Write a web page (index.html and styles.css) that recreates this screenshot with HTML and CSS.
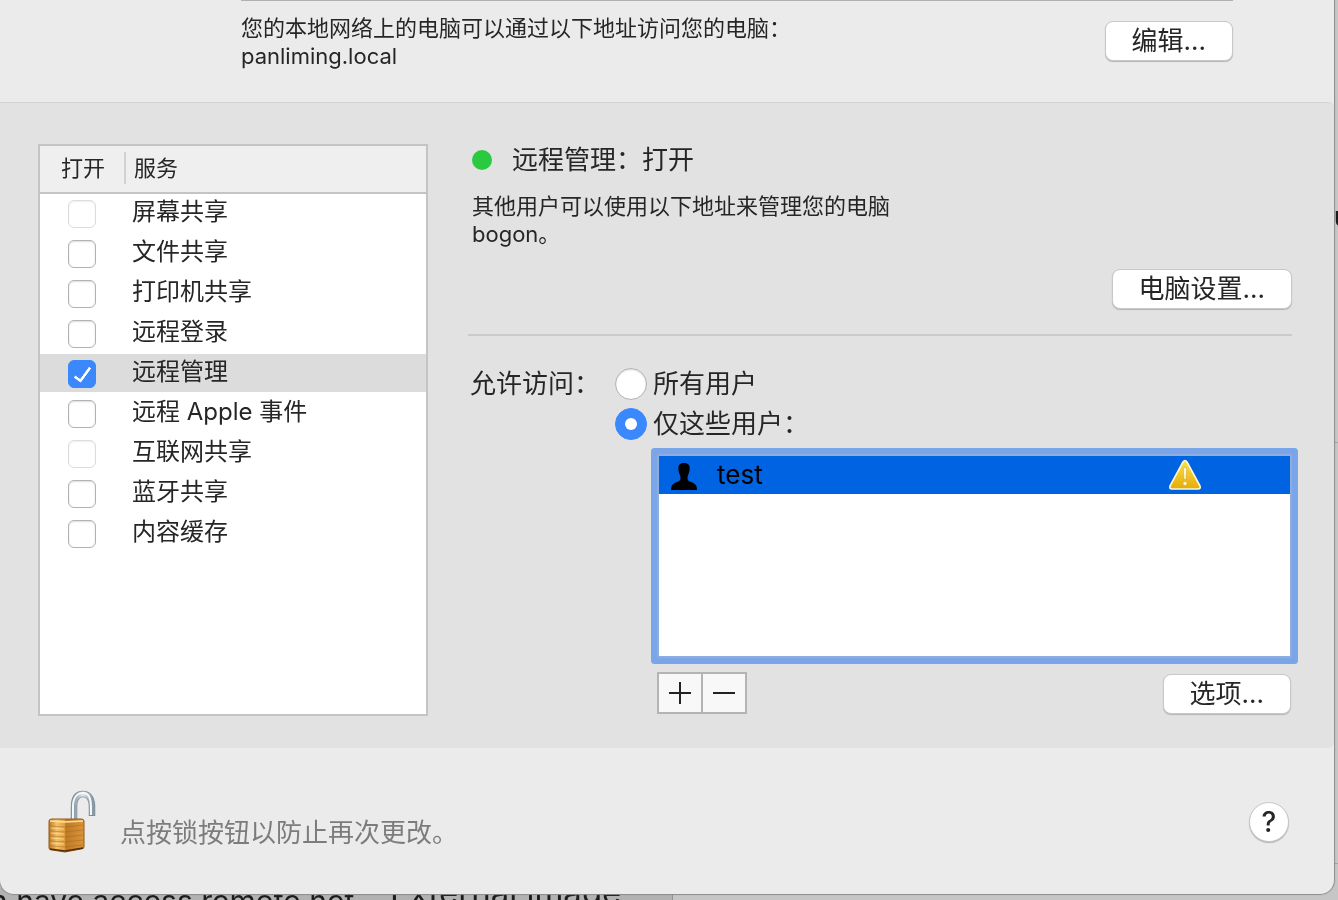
FILE: index.html
```html
<!DOCTYPE html>
<html lang="zh-CN">
<head>
    <meta charset="UTF-8">
    <meta name="viewport" content="width=device-width, initial-scale=1.0">
    <title>共享</title>
    <link rel="stylesheet" href="styles.css">
</head>
<body>

    <!-- Page behind the window -->
    <div class="backdrop" aria-hidden="true">
        <div class="backdrop-bottom">
            <span class="behind-left">n have access remote net</span>
            <span class="behind-right">External image</span>
        </div>
        <span class="behind-edge">u</span>
        <span class="behind-line"></span>
    </div>

    <main class="window">
        <!-- Top: computer address -->
        <header class="address">
            <p>您的本地网络上的电脑可以通过以下地址访问您的电脑：<br>panliming.local</p>
            <button class="push-button" type="button">编辑...</button>
        </header>

        <!-- Middle: services and their settings -->
        <section class="panel">
            <div class="services">
                <table>
                    <thead>
                        <tr>
                            <th class="col-on"><span>打开</span></th>
                            <th>服务</th>
                        </tr>
                    </thead>
                    <tbody>
                        <tr>
                            <td class="col-on"><input type="checkbox" id="screen" disabled></td>
                            <td><label for="screen">屏幕共享</label></td>
                        </tr>
                        <tr>
                            <td class="col-on"><input type="checkbox" id="file"></td>
                            <td><label for="file">文件共享</label></td>
                        </tr>
                        <tr>
                            <td class="col-on"><input type="checkbox" id="printer"></td>
                            <td><label for="printer">打印机共享</label></td>
                        </tr>
                        <tr>
                            <td class="col-on"><input type="checkbox" id="login"></td>
                            <td><label for="login">远程登录</label></td>
                        </tr>
                        <tr class="selected">
                            <td class="col-on"><input type="checkbox" id="management" checked></td>
                            <td><label for="management">远程管理</label></td>
                        </tr>
                        <tr>
                            <td class="col-on"><input type="checkbox" id="events"></td>
                            <td><label for="events">远程 Apple 事件</label></td>
                        </tr>
                        <tr>
                            <td class="col-on"><input type="checkbox" id="internet" disabled></td>
                            <td><label for="internet">互联网共享</label></td>
                        </tr>
                        <tr>
                            <td class="col-on"><input type="checkbox" id="bluetooth"></td>
                            <td><label for="bluetooth">蓝牙共享</label></td>
                        </tr>
                        <tr>
                            <td class="col-on"><input type="checkbox" id="cache"></td>
                            <td><label for="cache">内容缓存</label></td>
                        </tr>
                    </tbody>
                </table>
            </div>

            <div class="details">
                <h1><span class="status-dot"></span>远程管理：打开</h1>
                <p class="description">其他用户可以使用以下地址来管理您的电脑<br>bogon。</p>
                <div class="settings-row">
                    <button class="push-button" type="button">电脑设置...</button>
                </div>
                <hr>

                <div class="access" role="radiogroup" aria-labelledby="access-label">
                    <span id="access-label">允许访问：</span>
                    <div class="access-options">
                        <div class="option">
                            <input type="radio" name="access" id="all-users">
                            <label for="all-users">所有用户</label>
                        </div>
                        <div class="option">
                            <input type="radio" name="access" id="only-users" checked>
                            <label for="only-users">仅这些用户：</label>
                        </div>
                    </div>
                </div>

                <div class="users">
                    <table>
                        <tbody>
                            <tr>
                                <td class="user-icon">
                                    <svg width="28" height="28" viewBox="0 0 28 28">
                                        <path d="M14 1C10.500 1 8.300 2.700 8.300 6.300C8.300 8.300 8.600 10 9.300 11.500C9.900 13 10.500 14.200 10.500 15.800C10.500 18.200 9.800 19.100 7 20.100C3 21.500 1 23.500 1 28H27C27 23.500 25 21.500 21 20.100C18.200 19.100 17.500 18.200 17.500 15.800C17.500 14.200 18.100 13 18.700 11.500C19.400 10 19.700 8.300 19.700 6.300C19.700 2.700 17.500 1 14 1Z"/>
                                    </svg>
                                </td>
                                <td>test</td>
                                <td class="user-warning">
                                    <svg width="34" height="32" viewBox="0 0 34 32">
                                        <defs>
                                            <linearGradient id="warn" x1="0" y1="0" x2="0" y2="1">
                                                <stop offset="0" stop-color="#f9e04a"/>
                                                <stop offset="1" stop-color="#e5ac08"/>
                                            </linearGradient>
                                        </defs>
                                        <path d="M15 3Q17 0 19 3L32 27Q33 30 30 30H4Q1 30 2 27Z" fill="url(#warn)" stroke="#fff6d4" stroke-width="1.600" stroke-linejoin="round"/>
                                        <path d="M15.300 10Q15.300 8.500 17 8.500T18.700 10L17.900 20.500H16.100Z" fill="#fffbe2" stroke="#cfa21a" stroke-width=".5"/>
                                        <circle cx="17" cy="24.500" r="2" fill="#fffbe2" stroke="#cfa21a" stroke-width=".5"/>
                                    </svg>
                                </td>
                            </tr>
                        </tbody>
                    </table>
                </div>

                <div class="users-actions">
                    <div class="add-remove">
                        <button type="button" aria-label="添加">
                            <svg width="22" height="22" viewBox="0 0 22 22"><path d="M0 11H22M11 0V22"/></svg>
                        </button>
                        <button type="button" aria-label="移除">
                            <svg width="22" height="22" viewBox="0 0 22 22"><path d="M0 11H22"/></svg>
                        </button>
                    </div>
                    <button class="push-button" type="button">选项...</button>
                </div>
            </div>
        </section>

        <!-- Bottom: lock and help -->
        <footer>
            <button class="lock-button" type="button" aria-label="锁">
                <svg width="50" height="63" viewBox="0 0 50 63">
                    <defs>
                        <linearGradient id="steel" x1="0" y1="0" x2="1" y2="0">
                            <stop offset="0" stop-color="#8b9ba5"/>
                            <stop offset=".5" stop-color="#dfe8ed"/>
                            <stop offset="1" stop-color="#8b9ba5"/>
                        </linearGradient>
                        <linearGradient id="brass" x1="0" y1="0" x2="1" y2="0">
                            <stop offset="0" stop-color="#c07a22"/>
                            <stop offset=".22" stop-color="#f3c26a"/>
                            <stop offset=".44" stop-color="#e5a03f"/>
                            <stop offset=".48" stop-color="#bd7a28"/>
                            <stop offset="1" stop-color="#dc9438"/>
                        </linearGradient>
                    </defs>
                    <path d="M26 30V17C26 8 29 4 35 4S44 9 44 17V26" fill="none" stroke="#7d8d97" stroke-width="6.500"/>
                    <path d="M26 30V17C26 8 29 4 35 4S44 9 44 17V25" fill="none" stroke="url(#steel)" stroke-width="5"/>
                    <path d="M25 30V17C25 8 29 3 35 3S43 9 43 17V25" fill="none" stroke="#f4f8fa" stroke-width="2"/>
                    <path d="M1 31Q1 29 4 29H33Q36 29 36 31V57Q36 59 33 59L17 62L4 60Q1 60 1 58Z" fill="url(#brass)" stroke="#8d5a1b"/>
                    <path d="M2 31L17 32L35 31" fill="none" stroke="#ffe0a0" stroke-width="1.500"/>
                    <path d="M2 36L17 37L35 35M2 41L17 42L35 40M2 46L17 47L35 45M2 51L17 52L35 50M2 56L17 57L35 55" fill="none" stroke="#a0621b" stroke-opacity=".45"/>
                    <path d="M3 38L16 39M3 43L16 44M3 48L16 49M3 53L16 54" stroke="#ffe09a" stroke-opacity=".7"/>
                    <path d="M2 59L17 61L35 58" fill="none" stroke="#5b2c08" stroke-width="1.500"/>
                </svg>
            </button>
            <p>点按锁按钮以防止再次更改。</p>
            <button class="help-button" type="button" aria-label="帮助">?</button>
        </footer>
    </main>

</body>
</html>
```
FILE: styles.css
```css
* {
    box-sizing: border-box;
}
body {
    font-family: Inter, "Noto Sans CJK SC", sans-serif;
    font-size: 26px;
    line-height: 32px;
    color: #262626;
    background-color: #c6c6c6;
    margin: 0;
    min-height: 100vh;
    display: flex;
    padding: 0 4px 6px 0;
    overflow: hidden;
}
p, h1 {
    margin: 0;
    font-weight: 400;
}
button {
    font: inherit;
    color: inherit;
    padding: 0;
    border: none;
}
svg {
    display: block;
}
table {
    width: 100%;
    border-collapse: separate;
    border-spacing: 0;
}
td, th {
    padding: 0;
    text-align: left;
    font-weight: 400;
}
/* Page behind the window */
.backdrop {
    position: fixed;
    inset: 0;
    overflow: hidden;
}
.backdrop-bottom {
    position: absolute;
    left: 0;
    bottom: 0;
    width: 673px;
    height: 12px;
    background-color: #b2b2b2;
    border-right: 1px solid #929292;
    white-space: nowrap;
    color: #1c1c1c;
}
.behind-left, .behind-right {
    position: absolute;
    left: -10px;
    top: -3px;
    font-size: 30px;
}
.behind-right {
    left: 390px;
    top: -12px;
    font-size: 33px;
}
.behind-edge {
    position: absolute;
    right: -11px;
    top: 201px;
    color: #1c1c1c;
}
.behind-line {
    position: absolute;
    right: 0;
    top: 442px;
    width: 4px;
    height: 422px;
    border: solid #a4a4a4;
    border-width: 1px 0;
}
/* Window */
.window {
    position: relative;
    flex: 1;
    display: flex;
    flex-direction: column;
    background-color: #ebebeb;
    border-radius: 0 0 14px 14px;
    box-shadow: 0 0 1px 1px #8c8c8c;
}
/* Top: computer address */
.address {
    display: flex;
    justify-content: space-between;
    align-items: flex-start;
    margin: 0 101px 0 241px;
    padding: 13px 0 32px;
    border-top: 1px solid #b0b0b0;
    font-size: 22px;
    line-height: 28px;
}
.address .push-button {
    margin-top: 7px;
}
.push-button {
    height: 40px;
    padding: 0 26px;
    font-size: 26px;
    background-color: #fff;
    border: 1px solid #c8c8c8;
    border-radius: 8px;
    box-shadow: 0 1px 1px #b4b4b4;
}
/* Middle panel */
.panel {
    flex: 1;
    display: flex;
    gap: 40px;
    padding: 41px 42px 32px 38px;
    background-color: #e2e2e2;
    border-top: 1px solid #d2d2d2;
    border-radius: 0 6px 6px 0;
}
/* Service list */
.services {
    flex: 0 0 390px;
    background-color: #fff;
    border: 2px solid #c4c4c4;
    font-size: 24px;
}
.services th {
    height: 48px;
    padding: 0 0 2px 8px;
    background-color: #efefef;
    border-bottom: 2px solid #c4c4c4;
    font-size: 22px;
}
.services td {
    height: 40px;
    padding-left: 6px;
    border-bottom: 2px solid #fff;
}
.services label {
    display: block;
    line-height: 36px;
    padding-bottom: 2px;
}
.services .col-on {
    width: 86px;
    padding-left: 0;
}
.col-on span {
    display: block;
    padding-left: 21px;
    border-right: 2px solid #d2d2d2;
}
.services .selected td {
    background-color: #dcdcdc;
}
input {
    appearance: none;
    display: block;
    flex: none;
    margin: 0;
    background-color: #fff;
    border: 1px solid #b2b2b2;
    box-shadow: inset 0 1px 2px #ddd;
}
input[type="checkbox"] {
    width: 28px;
    height: 28px;
    margin: 2px 0 0 28px;
    border-radius: 6px;
}
input[type="checkbox"]:disabled {
    border-color: #dcdcdc;
    box-shadow: inset 0 1px 2px #eee;
}
input:checked {
    background-color: #3b88fd;
    border-color: #3b88fd;
    box-shadow: none;
}
input[type="checkbox"]:checked::after {
    content: "";
    display: block;
    box-sizing: border-box;
    width: 9px;
    height: 18px;
    margin: 3px 0 0 9px;
    border: solid #fff;
    border-width: 0 3px 3px 0;
    border-radius: 1px;
    transform: rotate(36deg);
}
/* Selected service */
.details {
    flex: 1;
}
h1 {
    display: flex;
    align-items: center;
    gap: 20px;
    padding-left: 4px;
    font-size: 26px;
    line-height: 32px;
}
.status-dot {
    width: 20px;
    height: 20px;
    border-radius: 50%;
    background-color: #29c940;
}
.description {
    margin-top: 16px;
    padding-left: 4px;
    font-size: 22px;
    line-height: 28px;
}
.settings-row {
    display: flex;
    justify-content: flex-end;
    margin-top: 21px;
}
hr {
    height: 2px;
    margin: 25px 0 28px;
    border: none;
    background-color: #cacaca;
}
/* Access */
.access {
    display: flex;
    line-height: 40px;
}
#access-label {
    width: 147px;
    padding-left: 2px;
}
.option {
    display: flex;
    align-items: center;
    gap: 6px;
    height: 40px;
}
input[type="radio"] {
    width: 32px;
    height: 32px;
    border-radius: 50%;
}
input[type="radio"]:checked::after {
    content: "";
    display: block;
    width: 12px;
    height: 12px;
    margin: 9px;
    border-radius: 50%;
    background-color: #fff;
}
.users {
    min-height: 204px;
    margin: 10px 0 14px 189px;
    background-color: #fff;
    border: 2px solid #8eacdc;
    box-shadow: 0 0 0 6px #7aa5e9;
    border-radius: 1px;
}
.users td {
    height: 38px;
    color: #000;
    background-color: #0063e1;
}
.users .user-icon {
    width: 58px;
    padding: 2px 0 0 11px;
}
.users .user-warning {
    width: 122px;
}
.users-actions {
    display: flex;
    justify-content: space-between;
    align-items: flex-end;
    margin-left: 189px;
    padding-right: 1px;
}
.add-remove {
    display: flex;
    gap: 2px;
    padding: 2px;
    background-color: #b4b4b4;
}
.add-remove button {
    display: grid;
    place-items: center;
    width: 42px;
    height: 38px;
    background-color: #f8f8f8;
}
.add-remove path {
    stroke: #222;
    stroke-width: 2;
}
/* Bottom: lock and help */
footer {
    display: flex;
    align-items: flex-end;
    padding: 42px 45px 41px 48px;
    color: #7c7c7c;
}
footer p {
    flex: 1;
    padding-left: 22px;
    line-height: 40px;
}
.lock-button {
    background: none;
}
.help-button {
    align-self: center;
    width: 40px;
    height: 40px;
    color: #262626;
    font-size: 28px;
    font-weight: 500;
    background-color: #fff;
    border: 1px solid #c8c8c8;
    border-radius: 50%;
    box-shadow: 0 1px 1px #b4b4b4;
}
```
